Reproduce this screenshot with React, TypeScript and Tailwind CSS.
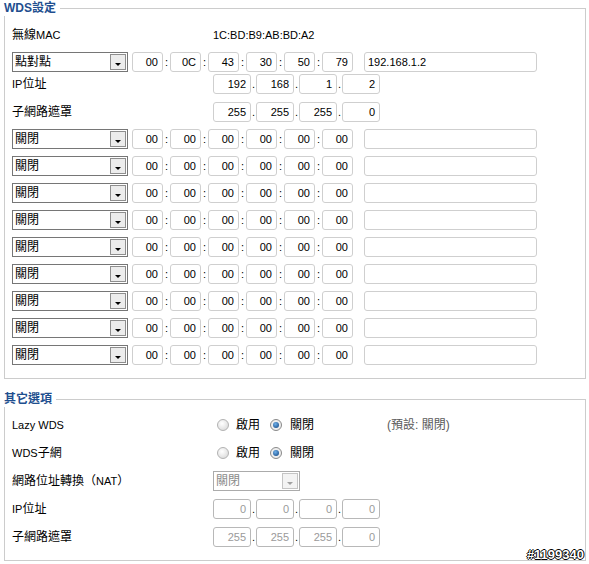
import React from 'react'

const macRows = Array.from({ length: 9 }, (_, i) => i)

function Legend({ title }: { title: string }) {
  return (
    <div className="flex h-[16px]">
      <span className="pr-[4px] text-[12px] font-bold leading-[16px] text-[#1f4f8f]">{title}</span>
      <div className="h-[8px] flex-1 self-end border-t border-r border-[#cccccc]" />
    </div>
  )
}

function Box({ v, w, disabled }: { v?: string; w: string; disabled?: boolean }) {
  return (
    <div
      className={`h-[20px] ${w} rounded-[3px] border pr-[4px] text-right text-[11px] leading-[18px] ${
        disabled ? 'border-[#b8b8b8] text-[#9a9a9a]' : 'border-[#cfcfcf] text-black'
      }`}
    >
      {v}
    </div>
  )
}

function Select({ label, w, disabled }: { label: string; w: string; disabled?: boolean }) {
  return (
    <div
      className={`flex h-[20px] ${w} items-center border bg-white ${
        disabled ? 'border-[#ababab] text-[#8a8a8a]' : 'border-[#767676] text-black'
      }`}
    >
      <span className="flex-1 pl-[2px] text-[12px] leading-[18px]">{label}</span>
      <div
        className={`mr-[1px] flex h-[16px] w-[16px] items-center justify-center border ${
          disabled ? 'border-[#c4c4c4] bg-[#f3f3f3]' : 'border-[#8e8e8e] bg-[#ececec]'
        }`}
      >
        <div
          className={`mt-[4px] h-0 w-0 border-t-[3px] border-r-[3px] border-l-[3px] border-r-transparent border-l-transparent ${
            disabled ? 'border-t-[#a0a0a0]' : 'border-t-black'
          }`}
        />
      </div>
    </div>
  )
}

function MacBoxes({ values }: { values: string[] }) {
  return (
    <div className="flex items-center">
      {values.map((v, i) => (
        <div key={i} className="flex items-center">
          <Box v={v} w="w-[31px]" />
          {i < values.length - 1 && <span className="w-[7px] text-center text-[11px]">:</span>}
        </div>
      ))}
    </div>
  )
}

function IpBoxes({ values, disabled }: { values: string[]; disabled?: boolean }) {
  return (
    <div className="flex items-center">
      {values.map((v, i) => (
        <div key={i} className="flex items-center">
          <Box v={v} w="w-[38px]" disabled={disabled} />
          {i < values.length - 1 && <span className="w-[5px] text-center text-[11px] leading-[20px]">.</span>}
        </div>
      ))}
    </div>
  )
}

function Radio({ checked }: { checked?: boolean }) {
  return checked ? (
    <div className="flex h-[12px] w-[12px] items-center justify-center rounded-full border border-[#8a8a8a] bg-[#eeeeee]">
      <div className="h-[6px] w-[6px] rounded-full bg-[radial-gradient(circle_at_40%_35%,#6fb0ea,#0c3f7c)]" />
    </div>
  ) : (
    <div className="h-[12px] w-[12px] rounded-full border border-[#b2b2b2] bg-[radial-gradient(circle_at_40%_35%,#ffffff,#d4d4d4)]" />
  )
}

function OnOff() {
  return (
    <div className="ml-[4px] flex items-center text-[12px]">
      <Radio />
      <span className="ml-[7px]">啟用</span>
      <div className="ml-[10px]">
        <Radio checked />
      </div>
      <span className="ml-[8px]">關閉</span>
    </div>
  )
}

export default function App() {
  return (
    <div className="h-[564px] w-[589px] overflow-hidden bg-white font-['Liberation_Sans','Noto_Sans_CJK_TC',sans-serif] text-black">
      {/* WDS設定 */}
      <div className="ml-[4px] w-[582px]">
        <Legend title="WDS設定" />
        <div className="flex flex-col border-x border-b border-[#cccccc] pt-[9px] pb-[13px] pl-[7px]">
          <div className="flex h-[20px] items-center">
            <div className="w-[201px] text-[12px]">
              無線<span className="text-[11px]">MAC</span>
            </div>
            <span className="text-[11px]">1C:BD:B9:AB:BD:A2</span>
          </div>

          <div className="mt-[7px] flex h-[20px] items-center">
            <Select label="點對點" w="w-[116px]" />
            <div className="ml-[4px]">
              <MacBoxes values={['00', '0C', '43', '30', '50', '79']} />
            </div>
            <div className="ml-[11px] h-[20px] w-[173px] rounded-[3px] border border-[#cfcfcf] pl-[3px] text-[11px] leading-[18px]">
              192.168.1.2
            </div>
          </div>

          <div className="mt-[2px] flex h-[20px] items-center">
            <div className="w-[201px] text-[12px]">
              <span className="text-[11px]">IP</span>位址
            </div>
            <IpBoxes values={['192', '168', '1', '2']} />
          </div>

          <div className="mt-[8px] flex h-[20px] items-center">
            <div className="w-[201px] text-[12px]">子網路遮罩</div>
            <IpBoxes values={['255', '255', '255', '0']} />
          </div>

          {macRows.map((r) => (
            <div key={r} className="mt-[7px] flex h-[20px] items-center">
              <Select label="關閉" w="w-[116px]" />
              <div className="ml-[4px]">
                <MacBoxes values={['00', '00', '00', '00', '00', '00']} />
              </div>
              <div className="ml-[11px] h-[20px] w-[173px] rounded-[3px] border border-[#cfcfcf]" />
            </div>
          ))}
        </div>
      </div>

      {/* 其它選項 */}
      <div className="relative mt-[12px] ml-[4px] w-[582px]">
        <Legend title="其它選項" />
        <div className="flex flex-col border-x border-b border-[#cccccc] pt-[8px] pb-[13px] pl-[7px]">
          <div className="flex h-[20px] items-center">
            <div className="w-[201px] text-[11px]">Lazy WDS</div>
            <OnOff />
            <span className="ml-[73px] text-[12px] text-[#5a5a5a]">(預設: 關閉)</span>
          </div>

          <div className="mt-[8px] flex h-[20px] items-center">
            <div className="w-[201px] text-[12px]">
              <span className="text-[11px]">WDS</span>子網
            </div>
            <OnOff />
          </div>

          <div className="mt-[8px] flex h-[20px] items-center">
            <div className="w-[201px] text-[12px]">
              網路位址轉換（<span className="text-[11px]">NAT</span>）
            </div>
            <Select label="關閉" w="w-[87px]" disabled />
          </div>

          <div className="mt-[8px] flex h-[20px] items-center">
            <div className="w-[201px] text-[12px]">
              <span className="text-[11px]">IP</span>位址
            </div>
            <IpBoxes values={['0', '0', '0', '0']} disabled />
          </div>

          <div className="mt-[8px] flex h-[20px] items-center">
            <div className="w-[201px] text-[12px]">子網路遮罩</div>
            <IpBoxes values={['255', '255', '255', '0']} disabled />
          </div>
        </div>

        <span className="absolute right-[2px] bottom-[0px] text-[13px] leading-[13px] font-bold text-white [text-shadow:1px_0_0_#000,-1px_0_0_#000,0_1px_0_#000,0_-1px_0_#000]">
          #1199340
        </span>
      </div>
    </div>
  )
}
